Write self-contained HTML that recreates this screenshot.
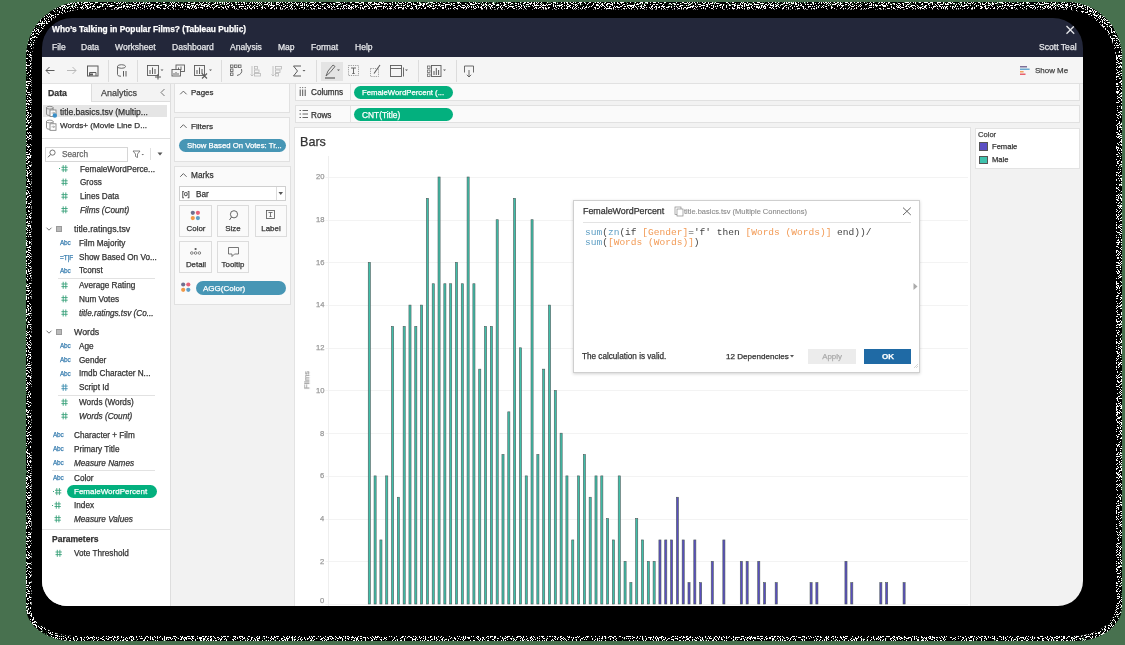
<!DOCTYPE html><html><head><meta charset="utf-8"><style>
*{margin:0;padding:0;box-sizing:border-box}
html,body{width:1125px;height:645px;overflow:hidden;background:#48714f;font-family:"Liberation Sans",sans-serif;-webkit-font-smoothing:antialiased}
.a{position:absolute}
.t{position:absolute;white-space:nowrap;line-height:1;will-change:transform;-webkit-text-stroke:0.25px currentColor}
svg{position:absolute;left:0;top:0}
</style></head><body><div class="a" style="left:29px;top:6px;width:1090px;height:632px;border-radius:54px 54px 44px 44px / 54px 54px 32px 32px;background:#000;filter:blur(1.5px)"></div>
<svg width="1125" height="645" style="position:absolute;left:0;top:0"><defs><filter id="nz" x="0" y="0" width="1125" height="645" filterUnits="userSpaceOnUse" color-interpolation-filters="sRGB"><feTurbulence type="fractalNoise" baseFrequency="0.9" numOctaves="2" seed="11" result="t"/><feColorMatrix in="t" type="matrix" values="1 0 0 0 0  1 0 0 0 0  1 0 0 0 0  0 1 0 0 0" result="m"/><feComponentTransfer in="m"><feFuncR type="discrete" tableValues="0 0 0 0 0 0 0 0 0 0 0 1 1 1 1 1 1 1 1 1"/><feFuncG type="discrete" tableValues="0 0 0 0 0 0 0 0 0 0 0 1 1 1 1 1 1 1 1 1"/><feFuncB type="discrete" tableValues="0 0 0 0 0 0 0 0 0 0 0 1 1 1 1 1 1 1 1 1"/><feFuncA type="discrete" tableValues="0 1 1"/></feComponentTransfer></filter><clipPath id="ring"><path fill-rule="evenodd" clip-rule="evenodd" d="M81 2 H1067 A55 55 0 0 1 1122 57 V607 A46 34 0 0 1 1076 641 H72 A46 34 0 0 1 26 607 V57 A55 55 0 0 1 81 2 Z M83 9.5 H1064 A52 52 0 0 1 1116 61.5 V606 A42 30 0 0 1 1074 636 H73 A42 30 0 0 1 31.5 606 V61.5 A52 52 0 0 1 83 9.5 Z"/></clipPath></defs><rect x="0" y="0" width="1125" height="645" filter="url(#nz)" clip-path="url(#ring)"/></svg>
<div class="a" style="left:0;top:0;width:1125px;height:645px;clip-path:inset(18px 42px 39px 42px round 30px 30px 25px 25px)">
<div class="a" style="left:42px;top:50px;width:1041.00px;height:556.00px;background:#f2f2f2;"></div>
<div class="a" style="left:42px;top:18px;width:1041.00px;height:39.00px;background:#23273a;"></div>
<div class="t" style="top:24.88px;font-size:8.35px;color:#fff;font-weight:bold;left:52.00px;">Who’s Talking in Popular Films? (Tableau Public)</div>
<div class="t" style="top:42.58px;font-size:8.55px;color:#e6e7ea;left:52.00px;">File</div>
<div class="t" style="top:42.58px;font-size:8.55px;color:#e6e7ea;left:81.00px;">Data</div>
<div class="t" style="top:42.58px;font-size:8.55px;color:#e6e7ea;left:115.00px;">Worksheet</div>
<div class="t" style="top:42.58px;font-size:8.55px;color:#e6e7ea;left:172.00px;">Dashboard</div>
<div class="t" style="top:42.58px;font-size:8.55px;color:#e6e7ea;left:230.00px;">Analysis</div>
<div class="t" style="top:42.58px;font-size:8.55px;color:#e6e7ea;left:278.00px;">Map</div>
<div class="t" style="top:42.58px;font-size:8.55px;color:#e6e7ea;left:311.00px;">Format</div>
<div class="t" style="top:42.58px;font-size:8.55px;color:#e6e7ea;left:354.50px;">Help</div>
<div class="t" style="top:42.55px;font-size:8.6px;color:#e6e7ea;right:48.80px;">Scott Teal</div>
<svg width="1125" height="645"><path d="M1066.5 26 L1074.2 33.8 M1074.2 26 L1066.5 33.8" stroke="#e6e7ea" stroke-width="1.3"/></svg>
<div class="a" style="left:42px;top:57px;width:1041.00px;height:26.00px;background:#f5f5f5;"></div>
<div class="a" style="left:42px;top:82.5px;width:1041.00px;height:1.00px;background:#e2e2e2;"></div>
<div class="a" style="left:108px;top:60px;width:1.00px;height:22.00px;background:#dcdcdc;"></div>
<div class="a" style="left:137px;top:60px;width:1.00px;height:22.00px;background:#dcdcdc;"></div>
<div class="a" style="left:221px;top:60px;width:1.00px;height:22.00px;background:#dcdcdc;"></div>
<div class="a" style="left:315.5px;top:60px;width:1.00px;height:22.00px;background:#dcdcdc;"></div>
<div class="a" style="left:321px;top:61.5px;width:21.50px;height:19.00px;background:#e4e4e4;"></div>
<div class="a" style="left:418px;top:60px;width:1.00px;height:22.00px;background:#dcdcdc;"></div>
<div class="a" style="left:455.5px;top:60px;width:1.00px;height:22.00px;background:#dcdcdc;"></div>
<div class="t" style="top:66.86px;font-size:7.96px;color:#444;left:1035.00px;">Show Me</div>
<div class="a" style="left:42px;top:83.5px;width:128.00px;height:522.50px;background:#ffffff;"></div>
<div class="a" style="left:170px;top:83.5px;width:1.00px;height:522.50px;background:#dedede;"></div>
<div class="a" style="left:91px;top:84px;width:79.00px;height:17.00px;background:#f3f3f3;"></div>
<div class="a" style="left:91px;top:84px;width:1.00px;height:17.00px;background:#dddddd;"></div>
<div class="a" style="left:91px;top:100.5px;width:79.00px;height:1.00px;background:#dddddd;"></div>
<div class="t" style="top:88.97px;font-size:8.77px;color:#333;font-weight:bold;left:48.00px;">Data</div>
<div class="t" style="top:88.86px;font-size:9px;color:#444;left:100.60px;">Analytics</div>
<div class="a" style="left:43px;top:105px;width:124.00px;height:12.00px;background:#e5e5e5;"></div>
<div class="t" style="top:107.80px;font-size:8.5px;color:#333;left:59.50px;">title.basics.tsv (Multip...</div>
<div class="t" style="top:121.60px;font-size:8.1px;color:#333;left:59.50px;">Words+ (Movie Line D...</div>
<div class="a" style="left:42px;top:137.7px;width:128.00px;height:0.80px;background:#dedede;"></div>
<div class="a" style="left:44.6px;top:146.6px;width:83.70px;height:15.10px;background:#ffffff;border:1px solid #d6d6d6;"></div>
<div class="t" style="top:151.05px;font-size:8.2px;color:#666;left:62.00px;">Search</div>
<div class="a" style="left:150px;top:148px;width:1.00px;height:12.00px;background:#e0e0e0;"></div>
<div class="a" style="left:58.9px;top:168.0px;width:1.20px;height:1.20px;background:#3aa27b;"></div>
<div class="t" style="top:165.65px;font-size:8.2px;color:#333;left:79.60px;">FemaleWordPerce...</div>
<div class="t" style="top:179.15px;font-size:8.2px;color:#333;left:79.60px;">Gross</div>
<div class="t" style="top:192.95px;font-size:8.2px;color:#333;left:79.60px;">Lines Data</div>
<div class="t" style="top:206.85px;font-size:8.2px;color:#333;font-style:italic;left:79.60px;">Films (Count)</div>
<div class="t" style="top:282.35px;font-size:8.2px;color:#333;left:79.20px;">Average Rating</div>
<div class="t" style="top:295.95px;font-size:8.2px;color:#333;left:79.20px;">Num Votes</div>
<div class="t" style="top:310.05px;font-size:8.2px;color:#333;font-style:italic;left:79.20px;">title.ratings.tsv (Co...</div>
<div class="t" style="top:384.45px;font-size:8.2px;color:#333;left:79.20px;">Script Id</div>
<div class="t" style="top:399.35px;font-size:8.2px;color:#333;left:79.20px;">Words (Words)</div>
<div class="t" style="top:412.95px;font-size:8.2px;color:#333;font-style:italic;left:79.20px;">Words (Count)</div>
<div class="a" style="left:52.0px;top:504.59999999999997px;width:1.20px;height:1.20px;background:#3aa27b;"></div>
<div class="t" style="top:502.25px;font-size:8.2px;color:#333;left:73.50px;">Index</div>
<div class="t" style="top:515.95px;font-size:8.2px;color:#333;font-style:italic;left:73.50px;">Measure Values</div>
<div class="t" style="top:550.35px;font-size:8.2px;color:#333;left:73.50px;">Vote Threshold</div>
<div class="t" style="top:240.22px;font-size:6.4px;color:#3b7fb0;left:60.00px;letter-spacing:-0.2px;">Abc</div>
<div class="t" style="top:240.15px;font-size:8.2px;color:#333;left:79.20px;">Film Majority</div>
<div class="t" style="top:267.52px;font-size:6.4px;color:#3b7fb0;left:60.00px;letter-spacing:-0.2px;">Abc</div>
<div class="t" style="top:267.45px;font-size:8.2px;color:#333;left:79.20px;">Tconst</div>
<div class="t" style="top:343.22px;font-size:6.4px;color:#3b7fb0;left:60.00px;letter-spacing:-0.2px;">Abc</div>
<div class="t" style="top:343.15px;font-size:8.2px;color:#333;left:79.20px;">Age</div>
<div class="t" style="top:356.82px;font-size:6.4px;color:#3b7fb0;left:60.00px;letter-spacing:-0.2px;">Abc</div>
<div class="t" style="top:356.75px;font-size:8.2px;color:#333;left:79.20px;">Gender</div>
<div class="t" style="top:370.52px;font-size:6.4px;color:#3b7fb0;left:60.00px;letter-spacing:-0.2px;">Abc</div>
<div class="t" style="top:370.45px;font-size:8.2px;color:#333;left:79.20px;">Imdb Character N...</div>
<div class="t" style="top:432.42px;font-size:6.4px;color:#3b7fb0;left:53.00px;letter-spacing:-0.2px;">Abc</div>
<div class="t" style="top:432.35px;font-size:8.2px;color:#333;left:73.50px;">Character + Film</div>
<div class="t" style="top:446.12px;font-size:6.4px;color:#3b7fb0;left:53.00px;letter-spacing:-0.2px;">Abc</div>
<div class="t" style="top:446.05px;font-size:8.2px;color:#333;left:73.50px;">Primary Title</div>
<div class="t" style="top:459.92px;font-size:6.4px;color:#3b7fb0;left:53.00px;letter-spacing:-0.2px;">Abc</div>
<div class="t" style="top:459.85px;font-size:8.2px;color:#333;font-style:italic;left:73.50px;">Measure Names</div>
<div class="t" style="top:475.12px;font-size:6.4px;color:#3b7fb0;left:53.00px;letter-spacing:-0.2px;">Abc</div>
<div class="t" style="top:475.05px;font-size:8.2px;color:#333;left:73.50px;">Color</div>
<div class="t" style="top:254.52px;font-size:6.4px;color:#3b7fb0;left:59.50px;">=T|F</div>
<div class="t" style="top:253.75px;font-size:8.2px;color:#333;left:79.20px;">Show Based On Vo...</div>
<div class="a" style="left:56px;top:226.2px;width:6.00px;height:6.00px;background:#b9b9b9;border:0.8px solid #9a9a9a;"></div>
<div class="t" style="top:225.46px;font-size:8.8px;color:#333;left:73.50px;">title.ratings.tsv</div>
<div class="a" style="left:56px;top:329.2px;width:6.00px;height:6.00px;background:#b9b9b9;border:0.8px solid #9a9a9a;"></div>
<div class="t" style="top:328.46px;font-size:8.8px;color:#333;left:73.50px;">Words</div>
<div class="a" style="left:57.9px;top:277.8px;width:97.50px;height:0.80px;background:#e2e2e2;"></div>
<div class="a" style="left:57.9px;top:394.5px;width:97.50px;height:0.80px;background:#e2e2e2;"></div>
<div class="a" style="left:52px;top:470.2px;width:103.40px;height:0.80px;background:#e2e2e2;"></div>
<div class="a" style="left:52.5px;top:491px;width:1.20px;height:1.20px;background:#3aa27b;"></div>
<div class="a" style="left:66.8px;top:485.4px;width:89.80px;height:13.10px;background:#03b07e;border-radius:7px;"></div>
<div class="t" style="top:488.34px;font-size:8.0px;color:#fff;left:73.50px;">FemaleWordPercent</div>
<div class="a" style="left:42px;top:529px;width:128.00px;height:1.00px;background:#e2e2e2;"></div>
<div class="a" style="left:43px;top:162.2px;width:126.00px;height:3.60px;background:#ffffff;"></div>
<div class="t" style="top:535.28px;font-size:8.54px;color:#333;font-weight:bold;left:52.00px;">Parameters</div>
<div class="a" style="left:174px;top:83px;width:116.00px;height:30.00px;background:#fafafa;border:1px solid #e1e1e1;"></div>
<div class="t" style="top:88.99px;font-size:7.9px;color:#333;left:190.50px;">Pages</div>
<div class="a" style="left:174px;top:117px;width:116.00px;height:45.00px;background:#fafafa;border:1px solid #e1e1e1;"></div>
<div class="t" style="top:122.70px;font-size:8.1px;color:#333;left:190.50px;">Filters</div>
<div class="a" style="left:179px;top:138.7px;width:107.00px;height:13.00px;background:#4796b5;border-radius:6.5px;"></div>
<div class="t" style="top:141.66px;font-size:7.75px;color:#fff;left:186.70px;">Show Based On Votes: Tr...</div>
<div class="a" style="left:174px;top:166px;width:117.00px;height:139.00px;background:#fafafa;border:1px solid #e1e1e1;"></div>
<div class="t" style="top:171.10px;font-size:8.3px;color:#333;left:190.50px;">Marks</div>
<div class="a" style="left:179.3px;top:186px;width:106.30px;height:14.70px;background:#fff;border:1px solid #cfcfcf;"></div>
<div class="a" style="left:275.8px;top:187px;width:0.80px;height:13.00px;background:#dcdcdc;"></div>
<div class="t" style="top:190.92px;font-size:6.8px;color:#444;left:182.00px;">[o]</div>
<div class="t" style="top:190.65px;font-size:8.2px;color:#333;left:196.00px;">Bar</div>
<div class="a" style="left:179.3px;top:204.7px;width:32.60px;height:32.00px;background:#fafafa;border:1px solid #dcdcdc;"></div>
<div class="t" style="top:224.89px;font-size:7.9px;color:#333;left:195.60px;transform:translateX(-50%);">Color</div>
<div class="a" style="left:217.2px;top:204.7px;width:32.30px;height:32.00px;background:#fafafa;border:1px solid #dcdcdc;"></div>
<div class="t" style="top:224.89px;font-size:7.9px;color:#333;left:233.35px;transform:translateX(-50%);">Size</div>
<div class="a" style="left:254.9px;top:204.7px;width:32.10px;height:32.00px;background:#fafafa;border:1px solid #dcdcdc;"></div>
<div class="t" style="top:224.89px;font-size:7.9px;color:#333;left:270.95px;transform:translateX(-50%);">Label</div>
<div class="a" style="left:179.3px;top:241.4px;width:32.60px;height:32.10px;background:#fafafa;border:1px solid #dcdcdc;"></div>
<div class="t" style="top:260.99px;font-size:7.9px;color:#333;left:195.60px;transform:translateX(-50%);">Detail</div>
<div class="a" style="left:217.2px;top:241.4px;width:32.30px;height:32.10px;background:#fafafa;border:1px solid #dcdcdc;"></div>
<div class="t" style="top:260.99px;font-size:7.9px;color:#333;left:233.35px;transform:translateX(-50%);">Tooltip</div>
<div class="a" style="left:196px;top:281.4px;width:89.80px;height:13.50px;background:#4796b5;border-radius:7px;"></div>
<div class="t" style="top:284.64px;font-size:8.0px;color:#fff;left:203.20px;">AGG(Color)</div>
<div class="a" style="left:295px;top:83.3px;width:785.00px;height:18.00px;background:#fafafa;border:1px solid #e1e1e1;"></div>
<div class="a" style="left:350.3px;top:84px;width:0.80px;height:16.50px;background:#e3e3e3;"></div>
<div class="t" style="top:88.87px;font-size:8.16px;color:#333;left:310.70px;">Columns</div>
<div class="a" style="left:354.2px;top:86px;width:99.10px;height:12.70px;background:#03b07e;border-radius:6.5px;"></div>
<div class="t" style="top:89.26px;font-size:7.75px;color:#fff;left:362.10px;">FemaleWordPercent (...</div>
<div class="a" style="left:295px;top:105.3px;width:785.00px;height:18.20px;background:#fafafa;border:1px solid #e1e1e1;"></div>
<div class="a" style="left:350.3px;top:106px;width:0.80px;height:16.80px;background:#e3e3e3;"></div>
<div class="t" style="top:111.67px;font-size:8.16px;color:#333;left:310.70px;">Rows</div>
<div class="a" style="left:354.2px;top:108.4px;width:99.10px;height:12.90px;background:#03b07e;border-radius:6.5px;"></div>
<div class="t" style="top:111.28px;font-size:8.35px;color:#fff;left:361.90px;">CNT(Title)</div>
<div class="a" style="left:294px;top:127px;width:677.00px;height:483.00px;background:#ffffff;border:1px solid #e3e3e3;"></div>
<div class="t" style="top:135.83px;font-size:12.6px;color:#333;left:300.00px;">Bars</div>
<div class="a" style="left:974.5px;top:127.5px;width:105.50px;height:41.50px;background:#ffffff;border:1px solid #e3e3e3;"></div>
<div class="t" style="top:130.94px;font-size:7.6px;color:#444;left:977.50px;">Color</div>
<div class="a" style="left:979px;top:142.2px;width:9.20px;height:8.40px;background:#5b4fc4;border:0.8px solid #555;"></div>
<div class="t" style="top:142.74px;font-size:7.6px;color:#333;left:991.70px;">Female</div>
<div class="a" style="left:979px;top:155.5px;width:9.20px;height:8.10px;background:#3fc2ad;border:0.8px solid #555;"></div>
<div class="t" style="top:155.94px;font-size:7.6px;color:#333;left:991.70px;">Male</div>
<div class="t" style="top:597.14px;font-size:7.6px;color:#9a9a9a;right:800.70px;">0</div>
<div class="t" style="top:557.64px;font-size:7.6px;color:#9a9a9a;right:800.70px;">2</div>
<div class="t" style="top:514.94px;font-size:7.6px;color:#9a9a9a;right:800.70px;">4</div>
<div class="t" style="top:472.24px;font-size:7.6px;color:#9a9a9a;right:800.70px;">6</div>
<div class="t" style="top:429.54px;font-size:7.6px;color:#9a9a9a;right:800.70px;">8</div>
<div class="t" style="top:386.84px;font-size:7.6px;color:#9a9a9a;right:800.70px;">10</div>
<div class="t" style="top:344.14px;font-size:7.6px;color:#9a9a9a;right:800.70px;">12</div>
<div class="t" style="top:301.44px;font-size:7.6px;color:#9a9a9a;right:800.70px;">14</div>
<div class="t" style="top:258.74px;font-size:7.6px;color:#9a9a9a;right:800.70px;">16</div>
<div class="t" style="top:216.04px;font-size:7.6px;color:#9a9a9a;right:800.70px;">18</div>
<div class="t" style="top:173.34px;font-size:7.6px;color:#9a9a9a;right:800.70px;">20</div>
<svg width="1125" height="645"><path d="M325.4 604.50 H968" stroke="#f3f3f3" stroke-width="1"/><path d="M325.4 561.50 H968" stroke="#f3f3f3" stroke-width="1"/><path d="M325.4 519.50 H968" stroke="#f3f3f3" stroke-width="1"/><path d="M325.4 476.50 H968" stroke="#f3f3f3" stroke-width="1"/><path d="M325.4 433.50 H968" stroke="#f3f3f3" stroke-width="1"/><path d="M325.4 390.50 H968" stroke="#f3f3f3" stroke-width="1"/><path d="M325.4 348.50 H968" stroke="#f3f3f3" stroke-width="1"/><path d="M325.4 305.50 H968" stroke="#f3f3f3" stroke-width="1"/><path d="M325.4 262.50 H968" stroke="#f3f3f3" stroke-width="1"/><path d="M325.4 220.50 H968" stroke="#f3f3f3" stroke-width="1"/><path d="M325.4 177.50 H968" stroke="#f3f3f3" stroke-width="1"/><path d="M328.5 156 V606" stroke="#eeeeee" stroke-width="1"/><rect x="368.25" y="262.40" width="2.1" height="341.60" fill="#3fbfa9" stroke="#4d5a5a" stroke-width="0.6"/><rect x="374.06" y="475.90" width="2.1" height="128.10" fill="#3fbfa9" stroke="#4d5a5a" stroke-width="0.6"/><rect x="379.88" y="539.95" width="2.1" height="64.05" fill="#3fbfa9" stroke="#4d5a5a" stroke-width="0.6"/><rect x="385.69" y="475.90" width="2.1" height="128.10" fill="#3fbfa9" stroke="#4d5a5a" stroke-width="0.6"/><rect x="391.50" y="326.45" width="2.1" height="277.55" fill="#3fbfa9" stroke="#4d5a5a" stroke-width="0.6"/><rect x="397.31" y="497.25" width="2.1" height="106.75" fill="#3fbfa9" stroke="#4d5a5a" stroke-width="0.6"/><rect x="403.13" y="326.45" width="2.1" height="277.55" fill="#3fbfa9" stroke="#4d5a5a" stroke-width="0.6"/><rect x="408.94" y="305.10" width="2.1" height="298.90" fill="#3fbfa9" stroke="#4d5a5a" stroke-width="0.6"/><rect x="414.75" y="326.45" width="2.1" height="277.55" fill="#3fbfa9" stroke="#4d5a5a" stroke-width="0.6"/><rect x="420.57" y="305.10" width="2.1" height="298.90" fill="#3fbfa9" stroke="#4d5a5a" stroke-width="0.6"/><rect x="426.38" y="198.35" width="2.1" height="405.65" fill="#3fbfa9" stroke="#4d5a5a" stroke-width="0.6"/><rect x="432.19" y="283.75" width="2.1" height="320.25" fill="#3fbfa9" stroke="#4d5a5a" stroke-width="0.6"/><rect x="438.01" y="177.00" width="2.1" height="427.00" fill="#3fbfa9" stroke="#4d5a5a" stroke-width="0.6"/><rect x="443.82" y="283.75" width="2.1" height="320.25" fill="#3fbfa9" stroke="#4d5a5a" stroke-width="0.6"/><rect x="449.63" y="283.75" width="2.1" height="320.25" fill="#3fbfa9" stroke="#4d5a5a" stroke-width="0.6"/><rect x="455.44" y="262.40" width="2.1" height="341.60" fill="#3fbfa9" stroke="#4d5a5a" stroke-width="0.6"/><rect x="461.26" y="283.75" width="2.1" height="320.25" fill="#3fbfa9" stroke="#4d5a5a" stroke-width="0.6"/><rect x="467.07" y="177.00" width="2.1" height="427.00" fill="#3fbfa9" stroke="#4d5a5a" stroke-width="0.6"/><rect x="472.88" y="283.75" width="2.1" height="320.25" fill="#3fbfa9" stroke="#4d5a5a" stroke-width="0.6"/><rect x="478.70" y="369.15" width="2.1" height="234.85" fill="#3fbfa9" stroke="#4d5a5a" stroke-width="0.6"/><rect x="484.51" y="326.45" width="2.1" height="277.55" fill="#3fbfa9" stroke="#4d5a5a" stroke-width="0.6"/><rect x="490.32" y="326.45" width="2.1" height="277.55" fill="#3fbfa9" stroke="#4d5a5a" stroke-width="0.6"/><rect x="496.14" y="219.70" width="2.1" height="384.30" fill="#3fbfa9" stroke="#4d5a5a" stroke-width="0.6"/><rect x="501.95" y="454.55" width="2.1" height="149.45" fill="#3fbfa9" stroke="#4d5a5a" stroke-width="0.6"/><rect x="507.76" y="411.85" width="2.1" height="192.15" fill="#3fbfa9" stroke="#4d5a5a" stroke-width="0.6"/><rect x="513.58" y="198.35" width="2.1" height="405.65" fill="#3fbfa9" stroke="#4d5a5a" stroke-width="0.6"/><rect x="519.39" y="347.80" width="2.1" height="256.20" fill="#3fbfa9" stroke="#4d5a5a" stroke-width="0.6"/><rect x="525.20" y="475.90" width="2.1" height="128.10" fill="#3fbfa9" stroke="#4d5a5a" stroke-width="0.6"/><rect x="531.01" y="219.70" width="2.1" height="384.30" fill="#3fbfa9" stroke="#4d5a5a" stroke-width="0.6"/><rect x="536.83" y="454.55" width="2.1" height="149.45" fill="#3fbfa9" stroke="#4d5a5a" stroke-width="0.6"/><rect x="542.64" y="369.15" width="2.1" height="234.85" fill="#3fbfa9" stroke="#4d5a5a" stroke-width="0.6"/><rect x="548.45" y="305.10" width="2.1" height="298.90" fill="#3fbfa9" stroke="#4d5a5a" stroke-width="0.6"/><rect x="554.27" y="390.50" width="2.1" height="213.50" fill="#3fbfa9" stroke="#4d5a5a" stroke-width="0.6"/><rect x="560.08" y="433.20" width="2.1" height="170.80" fill="#3fbfa9" stroke="#4d5a5a" stroke-width="0.6"/><rect x="565.89" y="475.90" width="2.1" height="128.10" fill="#3fbfa9" stroke="#4d5a5a" stroke-width="0.6"/><rect x="571.71" y="539.95" width="2.1" height="64.05" fill="#3fbfa9" stroke="#4d5a5a" stroke-width="0.6"/><rect x="577.52" y="475.90" width="2.1" height="128.10" fill="#3fbfa9" stroke="#4d5a5a" stroke-width="0.6"/><rect x="583.33" y="454.55" width="2.1" height="149.45" fill="#3fbfa9" stroke="#4d5a5a" stroke-width="0.6"/><rect x="589.14" y="497.25" width="2.1" height="106.75" fill="#3fbfa9" stroke="#4d5a5a" stroke-width="0.6"/><rect x="594.96" y="475.90" width="2.1" height="128.10" fill="#3fbfa9" stroke="#4d5a5a" stroke-width="0.6"/><rect x="600.77" y="475.90" width="2.1" height="128.10" fill="#3fbfa9" stroke="#4d5a5a" stroke-width="0.6"/><rect x="606.58" y="518.60" width="2.1" height="85.40" fill="#3fbfa9" stroke="#4d5a5a" stroke-width="0.6"/><rect x="612.40" y="539.95" width="2.1" height="64.05" fill="#3fbfa9" stroke="#4d5a5a" stroke-width="0.6"/><rect x="618.21" y="475.90" width="2.1" height="128.10" fill="#3fbfa9" stroke="#4d5a5a" stroke-width="0.6"/><rect x="624.02" y="561.30" width="2.1" height="42.70" fill="#3fbfa9" stroke="#4d5a5a" stroke-width="0.6"/><rect x="629.84" y="582.65" width="2.1" height="21.35" fill="#3fbfa9" stroke="#4d5a5a" stroke-width="0.6"/><rect x="635.65" y="518.60" width="2.1" height="85.40" fill="#3fbfa9" stroke="#4d5a5a" stroke-width="0.6"/><rect x="641.46" y="539.95" width="2.1" height="64.05" fill="#3fbfa9" stroke="#4d5a5a" stroke-width="0.6"/><rect x="647.27" y="561.30" width="2.1" height="42.70" fill="#3fbfa9" stroke="#4d5a5a" stroke-width="0.6"/><rect x="653.09" y="561.30" width="2.1" height="42.70" fill="#3fbfa9" stroke="#4d5a5a" stroke-width="0.6"/><rect x="658.90" y="539.95" width="2.1" height="64.05" fill="#5a4fc0" stroke="#4d5a5a" stroke-width="0.6"/><rect x="664.71" y="539.95" width="2.1" height="64.05" fill="#5a4fc0" stroke="#4d5a5a" stroke-width="0.6"/><rect x="670.53" y="539.95" width="2.1" height="64.05" fill="#5a4fc0" stroke="#4d5a5a" stroke-width="0.6"/><rect x="676.34" y="497.25" width="2.1" height="106.75" fill="#5a4fc0" stroke="#4d5a5a" stroke-width="0.6"/><rect x="682.15" y="539.95" width="2.1" height="64.05" fill="#5a4fc0" stroke="#4d5a5a" stroke-width="0.6"/><rect x="687.97" y="582.65" width="2.1" height="21.35" fill="#5a4fc0" stroke="#4d5a5a" stroke-width="0.6"/><rect x="693.78" y="539.95" width="2.1" height="64.05" fill="#5a4fc0" stroke="#4d5a5a" stroke-width="0.6"/><rect x="699.59" y="582.65" width="2.1" height="21.35" fill="#5a4fc0" stroke="#4d5a5a" stroke-width="0.6"/><rect x="711.22" y="561.30" width="2.1" height="42.70" fill="#5a4fc0" stroke="#4d5a5a" stroke-width="0.6"/><rect x="722.84" y="539.95" width="2.1" height="64.05" fill="#5a4fc0" stroke="#4d5a5a" stroke-width="0.6"/><rect x="740.28" y="561.30" width="2.1" height="42.70" fill="#5a4fc0" stroke="#4d5a5a" stroke-width="0.6"/><rect x="746.10" y="561.30" width="2.1" height="42.70" fill="#5a4fc0" stroke="#4d5a5a" stroke-width="0.6"/><rect x="757.72" y="561.30" width="2.1" height="42.70" fill="#5a4fc0" stroke="#4d5a5a" stroke-width="0.6"/><rect x="763.53" y="582.65" width="2.1" height="21.35" fill="#5a4fc0" stroke="#4d5a5a" stroke-width="0.6"/><rect x="775.16" y="582.65" width="2.1" height="21.35" fill="#5a4fc0" stroke="#4d5a5a" stroke-width="0.6"/><rect x="810.04" y="582.65" width="2.1" height="21.35" fill="#5a4fc0" stroke="#4d5a5a" stroke-width="0.6"/><rect x="815.85" y="582.65" width="2.1" height="21.35" fill="#5a4fc0" stroke="#4d5a5a" stroke-width="0.6"/><rect x="844.92" y="561.30" width="2.1" height="42.70" fill="#5a4fc0" stroke="#4d5a5a" stroke-width="0.6"/><rect x="850.73" y="582.65" width="2.1" height="21.35" fill="#5a4fc0" stroke="#4d5a5a" stroke-width="0.6"/><rect x="879.79" y="582.65" width="2.1" height="21.35" fill="#5a4fc0" stroke="#4d5a5a" stroke-width="0.6"/><rect x="885.61" y="582.65" width="2.1" height="21.35" fill="#5a4fc0" stroke="#4d5a5a" stroke-width="0.6"/><rect x="903.05" y="582.65" width="2.1" height="21.35" fill="#5a4fc0" stroke="#4d5a5a" stroke-width="0.6"/></svg>
<div class="t" style="left:307.2px;top:379.7px;font-size:7.6px;color:#9a9a9a;transform:translate(-50%,-50%) rotate(-90deg);transform-origin:center">Films</div>
<div class="a" style="left:573.2px;top:199.7px;width:346.4px;height:173.6px;background:#fff;border:1px solid #cfcfcf;box-shadow:0 1px 3px rgba(0,0,0,0.18)"></div>
<div class="t" style="top:207.31px;font-size:8.9px;color:#333;left:582.60px;">FemaleWordPercent</div>
<svg width="1125" height="645"><rect x="675" y="207" width="6" height="7.5" fill="none" stroke="#888" stroke-width="0.7"/><rect x="677" y="209" width="6" height="7" fill="#fff" stroke="#888" stroke-width="0.7"/><path d="M903 207.6 L910.8 215 M910.8 207.6 L903 215" stroke="#666" stroke-width="1"/><path d="M913.5 283 L917.5 286.5 L913.5 290 Z" fill="#aaa"/><path d="M914 368 L918 364 M916 368 L918 366" stroke="#bbb" stroke-width="0.6"/></svg>
<div class="t" style="top:207.99px;font-size:7.48px;color:#888;left:684.20px;-webkit-text-stroke:0.1px #888;">title.basics.tsv (Multiple Connections)</div>
<div class="a" style="left:583px;top:222.2px;width:328.00px;height:0.80px;background:#e3e3e3;"></div>
<div class="t" style="left:585.1px;top:227.50px;font-family:'Liberation Mono',monospace;font-size:9.55px;white-space:pre;-webkit-text-stroke:0"><span style="color:#5d9ec4">sum</span><span style="color:#444">(</span><span style="color:#5d9ec4">zn</span><span style="color:#444">(if </span><span style="color:#f29a55">[Gender]</span><span style="color:#444">='f' then </span><span style="color:#f29a55">[Words (Words)]</span><span style="color:#444"> end))/</span></div>
<div class="t" style="left:585.1px;top:237.60px;font-family:'Liberation Mono',monospace;font-size:9.55px;white-space:pre;-webkit-text-stroke:0"><span style="color:#5d9ec4">sum</span><span style="color:#444">(</span><span style="color:#f29a55">[Words (Words)]</span><span style="color:#444">)</span></div>
<div class="t" style="top:352.66px;font-size:8.17px;color:#333;left:581.70px;">The calculation is valid.</div>
<div class="t" style="top:352.70px;font-size:8.09px;color:#333;left:726.20px;">12 Dependencies</div>
<svg width="1125" height="645"><path d="M790 355 L794 355 L792 357.5 Z" fill="#555"/></svg>
<div class="a" style="left:808.2px;top:349px;width:47.40px;height:14.80px;background:#ececec;"></div>
<div class="t" style="top:352.69px;font-size:7.9px;color:#aaa;left:832.00px;transform:translateX(-50%);">Apply</div>
<div class="a" style="left:863.5px;top:349px;width:47.90px;height:14.80px;background:#1f6aa5;"></div>
<div class="t" style="top:352.64px;font-size:8px;color:#fff;font-weight:bold;left:887.50px;transform:translateX(-50%);">OK</div>
<svg width="1125" height="645"><path d="M46 70.5 H54.5 M49.5 67 L46 70.5 L49.5 74" fill="none" stroke="#5b5b5b" stroke-width="1"/><path d="M67 70.5 H76 M72.5 67 L76 70.5 L72.5 74" fill="none" stroke="#b8b8b8" stroke-width="1"/><rect x="87.5" y="66" width="10.5" height="10" fill="none" stroke="#5b5b5b" stroke-width="1"/><path d="M89.5 76 V72.5 H96 V76" fill="none" stroke="#5b5b5b" stroke-width="1"/><rect x="90" y="73.5" width="3" height="2" fill="#5b5b5b"/><ellipse cx="121.5" cy="66.5" rx="4" ry="1.8" fill="none" stroke="#5b5b5b" stroke-width="0.9"/><path d="M117.5 66.5 V74.5 Q117.5 76.3 121 76.3" fill="none" stroke="#5b5b5b" stroke-width="0.9"/><path d="M123.5 71 V76.5 M126 71 V76.5" stroke="#5b5b5b" stroke-width="1"/><rect x="147.5" y="65.5" width="11" height="10" fill="none" stroke="#5b5b5b" stroke-width="0.9"/><path d="M150 74 V70 M152.5 74 V67.5 M155 74 V69" stroke="#5b5b5b" stroke-width="1"/><path d="M155 77 H161 M158 74 V79.5" stroke="#5b5b5b" stroke-width="1.1"/><path d="M160.5 69.5 L163.5 69.5 L162 71 Z" fill="#5b5b5b"/><rect x="176" y="65" width="8.5" height="6.5" fill="none" stroke="#5b5b5b" stroke-width="0.9"/><rect x="172" y="69.5" width="8.5" height="6.5" fill="#f5f5f5" stroke="#5b5b5b" stroke-width="0.9"/><path d="M178.5 70 V67.5 M181 70 V66.5 M174 75 V73 M176 75 V72 M178 75 V73" stroke="#5b5b5b" stroke-width="0.9"/><rect x="194.5" y="65.5" width="10" height="10" fill="none" stroke="#5b5b5b" stroke-width="0.9"/><path d="M197 74 V70 M199.5 74 V67.5 M202 74 V69" stroke="#5b5b5b" stroke-width="1"/><path d="M202 73.5 L207 78.5 M207 73.5 L202 78.5" stroke="#5b5b5b" stroke-width="1.1"/><path d="M209 69.5 L212 69.5 L210.5 71 Z" fill="#5b5b5b"/><rect x="230.5" y="65" width="2.5" height="2.5" fill="none" stroke="#5b5b5b" stroke-width="0.8"/><rect x="234.5" y="65" width="2.5" height="2.5" fill="none" stroke="#5b5b5b" stroke-width="0.8"/><rect x="238.5" y="65" width="2.5" height="2.5" fill="none" stroke="#5b5b5b" stroke-width="0.8"/><rect x="230.5" y="69" width="2.5" height="2.5" fill="none" stroke="#5b5b5b" stroke-width="0.8"/><rect x="230.5" y="73" width="2.5" height="2.5" fill="none" stroke="#5b5b5b" stroke-width="0.8"/><path d="M241.5 69 Q243 74 237 75.5" fill="none" stroke="#5b5b5b" stroke-width="0.9"/><path d="M252 66 V76 M250.5 74.5 L252 76 L253.5 74.5" fill="none" stroke="#b8b8b8" stroke-width="0.8"/><rect x="254.5" y="66.5" width="3" height="2.5" fill="none" stroke="#b8b8b8" stroke-width="0.8"/><rect x="254.5" y="70" width="4.5" height="2.5" fill="none" stroke="#b8b8b8" stroke-width="0.8"/><rect x="254.5" y="73.5" width="6" height="2.5" fill="none" stroke="#b8b8b8" stroke-width="0.8"/><path d="M273 66 V76 M271.5 74.5 L273 76 L274.5 74.5" fill="none" stroke="#b8b8b8" stroke-width="0.8"/><rect x="275.5" y="66.5" width="6" height="2.5" fill="none" stroke="#b8b8b8" stroke-width="0.8"/><rect x="275.5" y="70" width="4.5" height="2.5" fill="none" stroke="#b8b8b8" stroke-width="0.8"/><rect x="275.5" y="73.5" width="3" height="2.5" fill="none" stroke="#b8b8b8" stroke-width="0.8"/><path d="M301 66 H293.5 L297.5 71 L293.5 76 H301" fill="none" stroke="#5b5b5b" stroke-width="1"/><path d="M302.5 70 L305.5 70 L304 71.5 Z" fill="#5b5b5b"/><path d="M326 76 L328 71 L333 65 L335 66.5 L330 72.5 Z" fill="none" stroke="#5b5b5b" stroke-width="0.9"/><path d="M325 78 H335" stroke="#5b5b5b" stroke-width="1.2"/><path d="M337 69.5 L340 69.5 L338.5 71 Z" fill="#5b5b5b"/><rect x="348.5" y="65.5" width="10" height="10" fill="none" stroke="#888" stroke-width="0.8" stroke-dasharray="1.2 1"/><path d="M351 68 H356 M353.5 68 V73.5 M352.3 73.5 H354.7" fill="none" stroke="#5b5b5b" stroke-width="0.9"/><rect x="370.5" y="68.5" width="8" height="8" fill="none" stroke="#888" stroke-width="0.8" stroke-dasharray="1.2 1"/><path d="M374 73.5 L380 65" stroke="#5b5b5b" stroke-width="1.1"/><rect x="390.5" y="65.5" width="11" height="11" fill="none" stroke="#5b5b5b" stroke-width="0.9"/><path d="M390.5 68.5 H401.5 M403.5 67.5 V76.5" stroke="#5b5b5b" stroke-width="0.9"/><path d="M405 69.5 L408 69.5 L406.5 71 Z" fill="#5b5b5b"/><rect x="427.5" y="66" width="2.5" height="2.5" fill="none" stroke="#5b5b5b" stroke-width="0.7"/><rect x="427.5" y="70" width="2.5" height="2.5" fill="none" stroke="#5b5b5b" stroke-width="0.7"/><rect x="427.5" y="74" width="2.5" height="2.5" fill="none" stroke="#5b5b5b" stroke-width="0.7"/><rect x="431.5" y="65.5" width="9.5" height="11" fill="none" stroke="#5b5b5b" stroke-width="0.9"/><path d="M434 75 V71 M436.3 75 V68 M438.6 75 V70" stroke="#5b5b5b" stroke-width="1"/><path d="M443 69.5 L446 69.5 L444.5 71 Z" fill="#5b5b5b"/><path d="M464.5 72.5 V66 H473.5 V72.5" fill="none" stroke="#5b5b5b" stroke-width="0.9"/><path d="M469 70 V77 M466.8 74.8 L469 77 L471.2 74.8" fill="none" stroke="#5b5b5b" stroke-width="0.9"/><rect x="1020" y="66" width="7" height="1.5" fill="#7d6f98"/><rect x="1020" y="68.5" width="9.6" height="1.5" fill="#6aaad0"/><rect x="1020" y="71" width="3.6" height="1.5" fill="#f2a35e"/><rect x="1020" y="73.5" width="5.5" height="1.5" fill="#e8606e"/><path d="M164.5 89 L161 92.5 L164.5 96" fill="none" stroke="#666" stroke-width="0.9"/><ellipse cx="49.8" cy="107.7" rx="3.3" ry="1.4" fill="none" stroke="#777" stroke-width="0.8"/><path d="M46.5 107.7 V114.0 Q46.5 115.5 49.8 115.5 M53.1 107.7 V110.0" fill="none" stroke="#777" stroke-width="0.8"/><rect x="50.0" y="110.0" width="6" height="6.5" fill="#fff" stroke="#777" stroke-width="0.8"/><path d="M51.5 113.0 H54.5 M53.3 111.8 L54.5 113.0 L53.3 114.2" fill="none" stroke="#777" stroke-width="0.6"/><circle cx="54.8" cy="115.5" r="2.2" fill="#3a8fc8"/><ellipse cx="49.8" cy="121.5" rx="3.3" ry="1.4" fill="none" stroke="#777" stroke-width="0.8"/><path d="M46.5 121.5 V127.8 Q46.5 129.3 49.8 129.3 M53.1 121.5 V123.8" fill="none" stroke="#777" stroke-width="0.8"/><rect x="50.0" y="123.8" width="6" height="6.5" fill="#fff" stroke="#777" stroke-width="0.8"/><path d="M51.5 126.8 H54.5 M53.3 125.6 L54.5 126.8 L53.3 128.0" fill="none" stroke="#777" stroke-width="0.6"/><circle cx="52.5" cy="152.6" r="2.6" fill="none" stroke="#666" stroke-width="0.9"/><path d="M50.6 154.5 L48 157.3" stroke="#666" stroke-width="1"/><path d="M133 151 H140 L137.5 154 V157.5 L135.5 156.5 V154 Z" fill="none" stroke="#666" stroke-width="0.8"/><path d="M141.5 154 L144 154 L142.75 155.3 Z" fill="#666"/><path d="M157.5 152.5 L162.5 152.5 L160 155.5 Z" fill="#555"/><path d="M63.199999999999996 165.1 V172.1 M65.8 165.1 V172.1 M61.4 167.29999999999998 H67.7 M61.4 169.9 H67.7" stroke="#3aa27b" stroke-width="0.9"/><path d="M63.199999999999996 178.6 V185.6 M65.8 178.6 V185.6 M61.4 180.79999999999998 H67.7 M61.4 183.4 H67.7" stroke="#3aa27b" stroke-width="0.9"/><path d="M63.199999999999996 192.4 V199.4 M65.8 192.4 V199.4 M61.4 194.6 H67.7 M61.4 197.20000000000002 H67.7" stroke="#3aa27b" stroke-width="0.9"/><path d="M63.199999999999996 206.3 V213.3 M65.8 206.3 V213.3 M61.4 208.5 H67.7 M61.4 211.10000000000002 H67.7" stroke="#3aa27b" stroke-width="0.9"/><path d="M63.199999999999996 281.8 V288.8 M65.8 281.8 V288.8 M61.4 284.0 H67.7 M61.4 286.6 H67.7" stroke="#3aa27b" stroke-width="0.9"/><path d="M63.199999999999996 295.4 V302.4 M65.8 295.4 V302.4 M61.4 297.59999999999997 H67.7 M61.4 300.2 H67.7" stroke="#3aa27b" stroke-width="0.9"/><path d="M63.199999999999996 309.5 V316.5 M65.8 309.5 V316.5 M61.4 311.7 H67.7 M61.4 314.3 H67.7" stroke="#3aa27b" stroke-width="0.9"/><path d="M63.199999999999996 383.9 V390.9 M65.8 383.9 V390.9 M61.4 386.09999999999997 H67.7 M61.4 388.7 H67.7" stroke="#3f8fb0" stroke-width="0.9"/><path d="M63.199999999999996 398.8 V405.8 M65.8 398.8 V405.8 M61.4 401.0 H67.7 M61.4 403.6 H67.7" stroke="#3aa27b" stroke-width="0.9"/><path d="M63.199999999999996 412.4 V419.4 M65.8 412.4 V419.4 M61.4 414.59999999999997 H67.7 M61.4 417.2 H67.7" stroke="#3aa27b" stroke-width="0.9"/><path d="M56.3 501.7 V508.7 M58.9 501.7 V508.7 M54.5 503.9 H60.8 M54.5 506.5 H60.8" stroke="#3aa27b" stroke-width="0.9"/><path d="M56.3 515.4 V522.4 M58.9 515.4 V522.4 M54.5 517.6 H60.8 M54.5 520.1999999999999 H60.8" stroke="#3aa27b" stroke-width="0.9"/><path d="M57.3 549.8 V556.8 M59.9 549.8 V556.8 M55.5 552.0 H61.8 M55.5 554.5999999999999 H61.8" stroke="#3aa27b" stroke-width="0.9"/><path d="M46.5 227.7 L49 230.2 L51.5 227.7" fill="none" stroke="#666" stroke-width="0.9"/><path d="M46.5 330.7 L49 333.2 L51.5 330.7" fill="none" stroke="#666" stroke-width="0.9"/><path d="M56.8 488.1 V495.1 M59.4 488.1 V495.1 M55 490.3 H61.3 M55 492.90000000000003 H61.3" stroke="#3aa27b" stroke-width="0.9"/><path d="M180.2 94.3 L183.39999999999998 91.1 L186.6 94.3" fill="none" stroke="#555" stroke-width="0.9"/><path d="M180.2 127.9 L183.39999999999998 124.7 L186.6 127.9" fill="none" stroke="#555" stroke-width="0.9"/><path d="M180.2 176.79999999999998 L183.39999999999998 173.6 L186.6 176.79999999999998" fill="none" stroke="#555" stroke-width="0.9"/><path d="M278.5 192 L283 192 L280.75 195 Z" fill="#555"/><circle cx="192.8" cy="212.8" r="2.1" fill="#6f6f8f"/><circle cx="197.9" cy="212.8" r="2.1" fill="#e8627a"/><circle cx="192.8" cy="218.1" r="2.1" fill="#f09a4a"/><circle cx="197.9" cy="218.1" r="2.1" fill="#5f9fc7"/><circle cx="234" cy="214.3" r="3.6" fill="none" stroke="#555" stroke-width="0.9"/><path d="M231.5 217 L229.5 220" stroke="#555" stroke-width="0.9"/><rect x="266.5" y="210.5" width="8" height="8" fill="none" stroke="#555" stroke-width="0.8"/><path d="M268.5 212.5 H272.5 M270.5 212.5 V216.5 M269.5 216.5 H271.5" fill="none" stroke="#555" stroke-width="0.8"/><circle cx="195.6" cy="249" r="1.1" fill="#555"/><circle cx="191.8" cy="253" r="1.3" fill="none" stroke="#555" stroke-width="0.7"/><circle cx="195.6" cy="253" r="1.3" fill="none" stroke="#555" stroke-width="0.7"/><circle cx="199.4" cy="253" r="1.3" fill="none" stroke="#555" stroke-width="0.7"/><path d="M228.5 247.5 H238.5 V254 H234.5 L232 256.5 V254 H228.5 Z" fill="none" stroke="#555" stroke-width="0.8"/><circle cx="183.2" cy="284.5" r="2.1" fill="#6f6f8f"/><circle cx="188.3" cy="284.5" r="2.1" fill="#e8627a"/><circle cx="183.2" cy="289.8" r="2.1" fill="#f09a4a"/><circle cx="188.3" cy="289.8" r="2.1" fill="#5f9fc7"/><path d="M300.2 89.5 V96 M302.7 89.5 V96 M305.2 89.5 V96" stroke="#555" stroke-width="1"/><circle cx="300.2" cy="87.6" r="0.6" fill="#555"/><circle cx="302.7" cy="87.6" r="0.6" fill="#555"/><circle cx="305.2" cy="87.6" r="0.6" fill="#555"/><path d="M302.5 110.5 H308 M302.5 114 H308 M302.5 117.5 H308" stroke="#555" stroke-width="0.9"/><path d="M299.5 110.5 H301 M299.5 114 H301 M299.5 117.5 H301" stroke="#555" stroke-width="0.9"/></svg>
</div></body></html>
